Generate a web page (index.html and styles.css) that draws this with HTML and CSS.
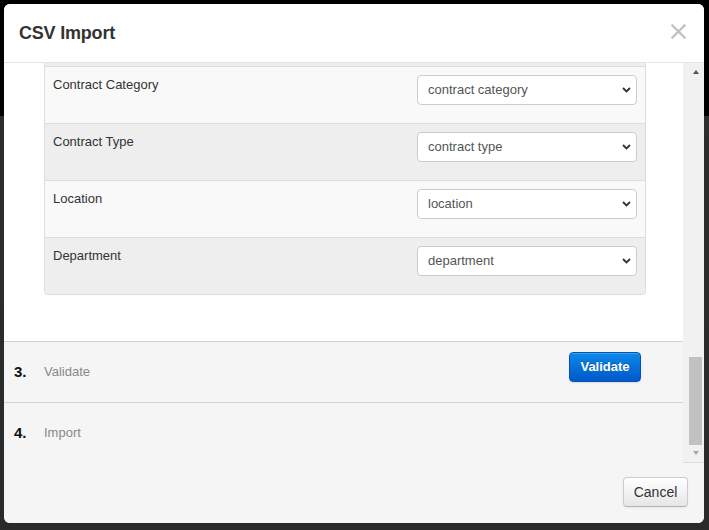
FILE: index.html
```html
<!DOCTYPE html>
<html lang="en">
<head>
<meta charset="utf-8">
<title>CSV Import</title>
<link rel="stylesheet" href="styles.css">
</head>
<body>
<div class="backdrop">
  <div class="modal">
    <div class="modal-header">
      <h3 class="modal-title">CSV Import</h3>
      <button class="close" type="button" aria-label="Close">
        <svg width="15" height="15" viewBox="0 0 15 15"><path d="M1.5 1.5 L13.5 13.5 M13.5 1.5 L1.5 13.5" stroke="#c2c2c2" stroke-width="2.4" stroke-linecap="square"/></svg>
      </button>
    </div>
    <div class="scroll-area">
      <div class="scroll-content">
        <div class="body-white">
          <div class="panel">
            <div class="panel-prev"></div>
            <div class="map-row odd">
              <span class="map-label">Contract Category</span>
              <div class="select-wrap"><select class="select"><option>contract category</option></select><svg class="chev" width="9" height="6" viewBox="0 0 9 6"><path d="M1 1 L4.5 4.5 L8 1" fill="none" stroke="#333" stroke-width="1.8"/></svg></div>
            </div>
            <div class="map-row even">
              <span class="map-label">Contract Type</span>
              <div class="select-wrap"><select class="select"><option>contract type</option></select><svg class="chev" width="9" height="6" viewBox="0 0 9 6"><path d="M1 1 L4.5 4.5 L8 1" fill="none" stroke="#333" stroke-width="1.8"/></svg></div>
            </div>
            <div class="map-row odd">
              <span class="map-label">Location</span>
              <div class="select-wrap"><select class="select"><option>location</option></select><svg class="chev" width="9" height="6" viewBox="0 0 9 6"><path d="M1 1 L4.5 4.5 L8 1" fill="none" stroke="#333" stroke-width="1.8"/></svg></div>
            </div>
            <div class="map-row even">
              <span class="map-label">Department</span>
              <div class="select-wrap"><select class="select"><option>department</option></select><svg class="chev" width="9" height="6" viewBox="0 0 9 6"><path d="M1 1 L4.5 4.5 L8 1" fill="none" stroke="#333" stroke-width="1.8"/></svg></div>
            </div>
          </div>
        </div>
        <div class="step">
          <div class="step-title"><span class="step-num">3.</span><span class="step-name">Validate</span></div>
          <button class="btn btn-primary" type="button">Validate</button>
        </div>
        <div class="step">
          <div class="step-title"><span class="step-num">4.</span><span class="step-name">Import</span></div>
        </div>
      </div>
      <div class="scrollbar">
        <div class="sb-btn"><span class="tri-up"></span></div>
        <div class="sb-space"></div>
        <div class="sb-thumb"></div>
        <div class="sb-btn"><span class="tri-down"></span></div>
      </div>
    </div>
    <div class="modal-footer">
      <button class="btn btn-default" type="button">Cancel</button>
    </div>
  </div>
</div>
</body>
</html>
```

FILE: styles.css
```css
* { box-sizing: border-box; }

html, body {
  margin: 0;
  padding: 0;
  width: 709px;
  height: 530px;
  overflow: hidden;
}

body {
  font-family: "Liberation Sans", Arial, sans-serif;
  color: #333;
  background: #2b2b2b;
}

.backdrop {
  width: 709px;
  height: 530px;
  padding: 4px 5px 7px 4px;
  background: linear-gradient(to bottom, #000 0, #000 116px, #2d2d2d 116px, #2a2a2a 100%);
}

.modal {
  width: 700px;
  height: 519px;
  background: #f5f5f5;
  border-radius: 6px;
  overflow: hidden;
  display: flex;
  flex-direction: column;
}

.modal-header {
  height: 59px;
  flex: 0 0 59px;
  background: #fff;
  border-bottom: 1px solid #e5e5e5;
  display: flex;
  align-items: center;
  justify-content: space-between;
  padding: 0 18px 1px 15px;
}

.modal-title {
  margin: 0;
  font-size: 18px;
  font-weight: bold;
  color: #333;
  line-height: 20px;
  letter-spacing: -0.2px;
}

.close {
  border: 0;
  background: transparent;
  padding: 0;
  margin: 0 0 3px 0;
  width: 15px;
  height: 15px;
  display: block;
}
.close svg { display: block; }

.scroll-area {
  height: 400px;
  flex: 0 0 400px;
  display: flex;
  border-bottom: 1px solid #dcdcdc;
}

.scroll-content {
  width: 679px;
  display: flex;
  flex-direction: column;
}

.body-white {
  height: 278px;
  flex: 0 0 278px;
  background: #fff;
  padding: 0 37px 0 40px;
}

.panel {
  border: 1px solid #dddddd;
  border-top: 0;
  border-radius: 0 0 4px 4px;
  overflow: hidden;
}

.panel-prev {
  height: 3px;
  background: #eeeeee;
}

.map-row {
  height: 57px;
  border-top: 1px solid #dddddd;
  display: flex;
  justify-content: space-between;
  align-items: flex-start;
  padding: 8px 8px 0 8px;
}
.map-row.odd { background: #f9f9f9; }
.map-row.even { background: #eeeeee; }

.map-label {
  font-size: 13px;
  line-height: 16px;
  margin-top: 2px;
  color: #333;
}

.select-wrap {
  position: relative;
  width: 220px;
  height: 30px;
}

.select {
  -webkit-appearance: none;
  appearance: none;
  width: 220px;
  height: 30px;
  margin: 0;
  border: 1px solid #cccccc;
  border-radius: 4px;
  background: #fff;
  padding: 0 24px 0 10px;
  font-family: "Liberation Sans", Arial, sans-serif;
  font-size: 13px;
  color: #555;
  line-height: 28px;
}

.chev {
  position: absolute;
  right: 6px;
  top: 12px;
  display: block;
  pointer-events: none;
}

.step {
  height: 61px;
  flex: 0 0 61px;
  border-top: 1px solid #d2d2d2;
  background: #f5f5f5;
  display: flex;
  justify-content: space-between;
  align-items: flex-start;
  padding: 0 42px 0 10px;
}

.step-title {
  height: 59px;
  display: flex;
  align-items: center;
}

.step-num {
  display: inline-block;
  width: 30px;
  font-size: 15px;
  font-weight: bold;
  color: #111;
}

.step-name {
  font-size: 13px;
  color: #888;
}

.btn {
  font-family: "Liberation Sans", Arial, sans-serif;
  border-radius: 4px;
  cursor: pointer;
  height: 30px;
  margin: 0;
}

.btn-primary {
  margin-top: 10px;
  width: 72px;
  padding: 0 0 1px 0;
  font-size: 13px;
  font-weight: bold;
  color: #fff;
  text-shadow: 0 -1px 0 rgba(0, 0, 0, 0.25);
  background: linear-gradient(to bottom, #0b8ae9 0%, #0058c9 100%);
  border: 1px solid #0452b3;
  box-shadow: inset 0 1px 0 rgba(255, 255, 255, 0.2), 0 1px 2px rgba(0, 0, 0, 0.1);
}

.scrollbar {
  width: 21px;
  flex: 0 0 21px;
  background: #f1f1f1;
  display: flex;
  flex-direction: column;
  padding-left: 4px;
}

.sb-btn {
  height: 17px;
  flex: 0 0 17px;
  display: flex;
  align-items: center;
  justify-content: center;
}

.tri-up {
  width: 0;
  height: 0;
  border-left: 3.5px solid transparent;
  border-right: 3.5px solid transparent;
  border-bottom: 4px solid #505050;
  margin-top: 1px;
}

.tri-down {
  width: 0;
  height: 0;
  border-left: 3.5px solid transparent;
  border-right: 3.5px solid transparent;
  border-top: 4px solid #a3a3a3;
  margin-bottom: 1px;
}

.sb-space { flex: 1 1 auto; }

.sb-thumb {
  height: 88px;
  flex: 0 0 88px;
  margin: 0 2px;
  background: #c1c1c1;
}

.modal-footer {
  flex: 1 1 auto;
  background: #f5f5f5;
  display: flex;
  justify-content: flex-end;
  align-items: flex-start;
  padding: 14px 16px 0 0;
}

.btn-default {
  width: 65px;
  padding: 0;
  font-size: 14px;
  color: #333;
  background: linear-gradient(to bottom, #ffffff 0%, #e6e6e6 100%);
  border: 1px solid #cccccc;
  border-bottom-color: #b3b3b3;
  box-shadow: inset 0 1px 0 rgba(255, 255, 255, 0.2), 0 1px 2px rgba(0, 0, 0, 0.05);
}
```
